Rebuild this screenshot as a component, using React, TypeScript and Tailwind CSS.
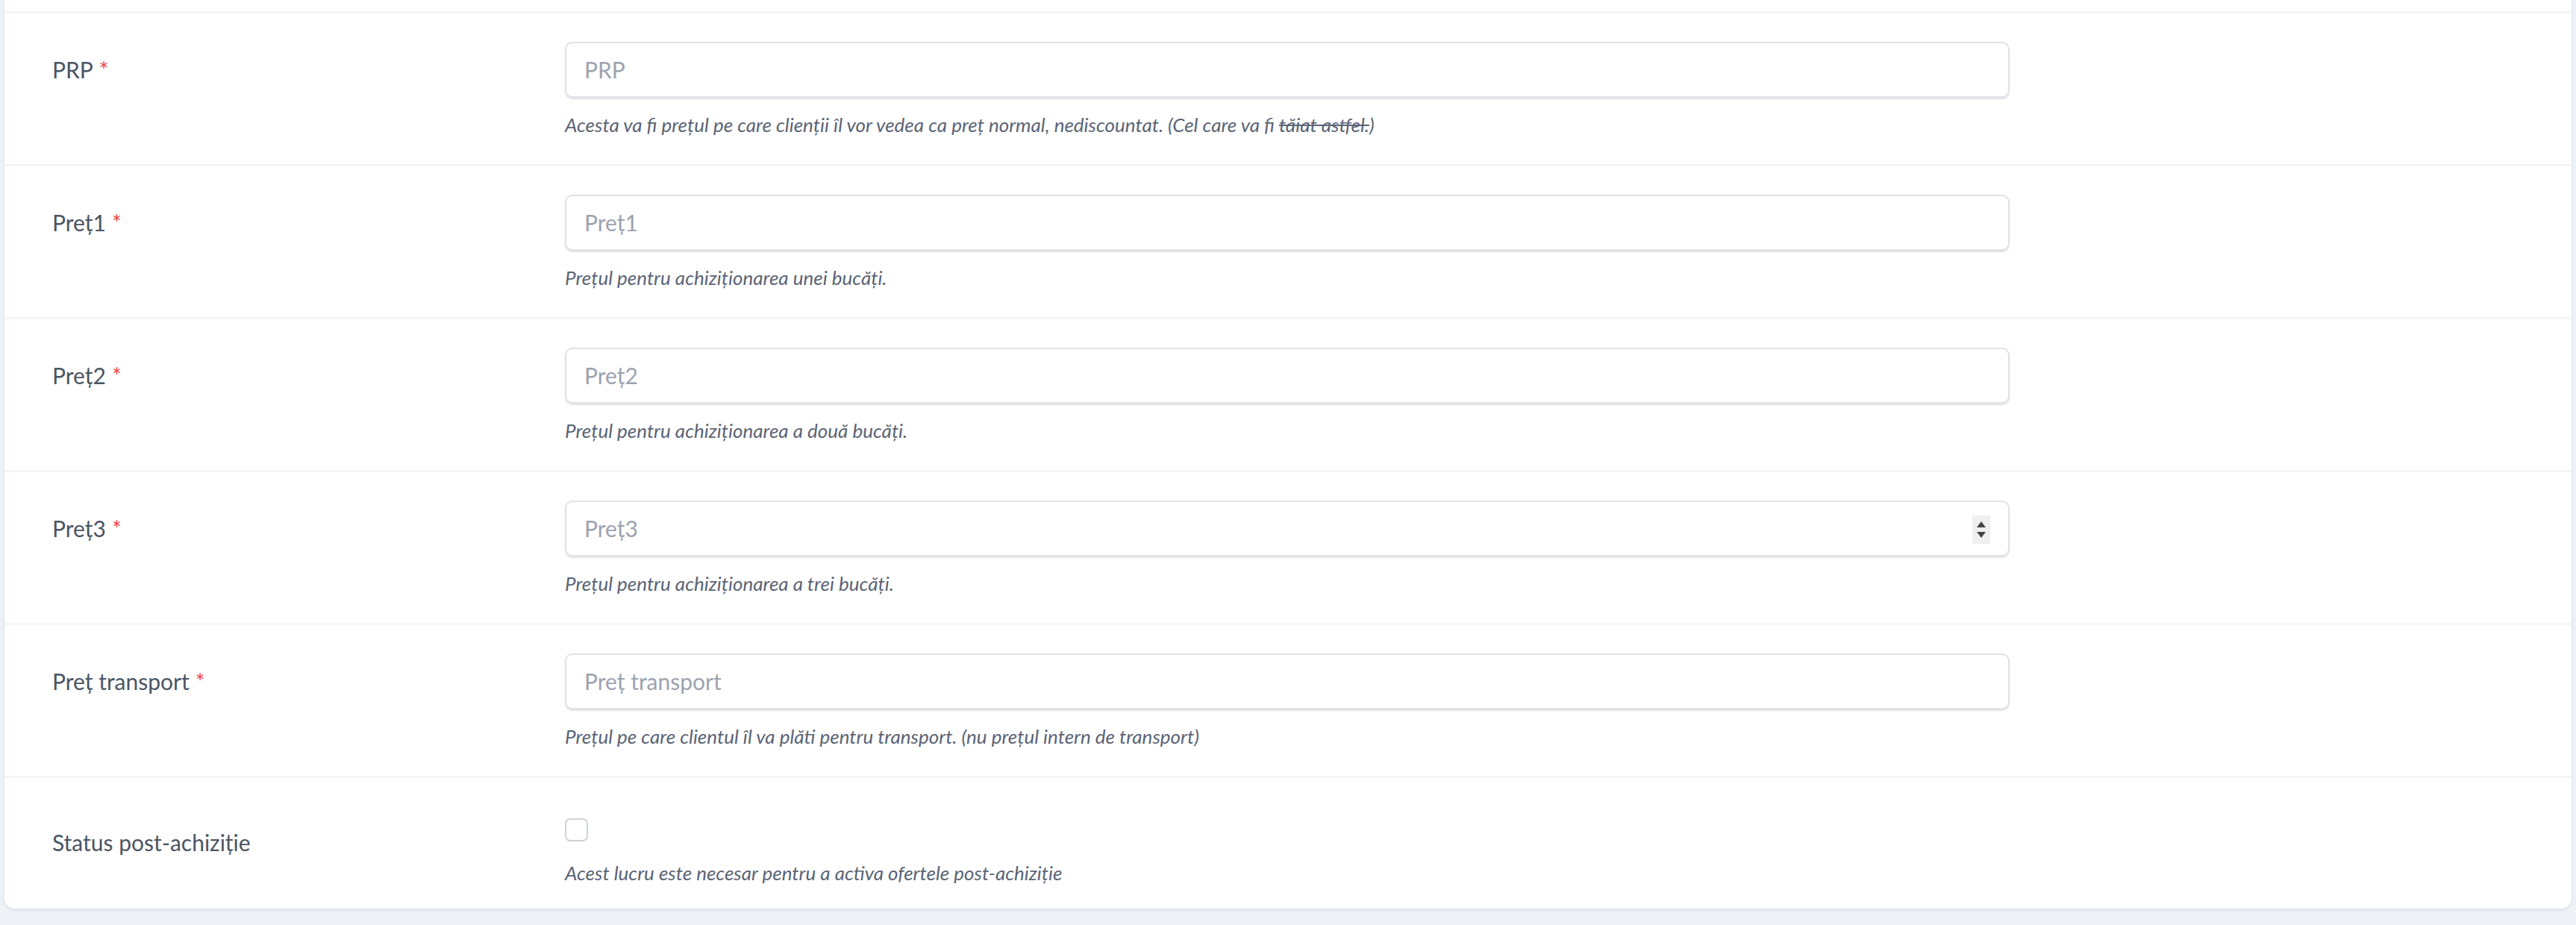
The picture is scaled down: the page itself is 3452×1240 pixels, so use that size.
import React from "react";

const rows = [
  { label: "PRP", ph: "PRP", help: <>Acesta va fi prețul pe care clienții îl vor vedea ca preț normal, nediscountat. (Cel care va fi <span className="line-through">tăiat astfel.</span>)</> },
  { label: "Preț1", ph: "Preț1", help: "Prețul pentru achiziționarea unei bucăți." },
  { label: "Preț2", ph: "Preț2", help: "Prețul pentru achiziționarea a două bucăți." },
  { label: "Preț3", ph: "Preț3", help: "Prețul pentru achiziționarea a trei bucăți.", spin: true },
  { label: "Preț transport", ph: "Preț transport", help: "Prețul pe care clientul îl va plăti pentru transport. (nu prețul intern de transport)" },
];

export default function App() {
  return (
    <div className="min-h-[1240px] bg-[#eef2f6] px-[6px] pb-[12px]" style={{ fontFamily: "Lato, 'Open Sans', sans-serif" }}>
      <div className="bg-white rounded-b-[14px] shadow-[0_2px_4px_rgba(0,0,0,0.08)]">
        <div className="h-[15px]" />
        {rows.map((r, i) => (
          <div key={i} className="flex border-t-[3px] border-[#f3f5f8] pt-[38px] pb-[35px]">
            <div className="w-[751px] pl-[64px] h-[75px] flex items-center text-[30px] text-[#4b5563]">
              {r.label}<span className="text-[#ef4444] ml-[8px]">*</span>
            </div>
            <div className="w-[1936px]">
              <div className="relative h-[75px] border-2 border-[#dfe3e8] rounded-[10px] shadow-[0_2px_2px_rgba(0,0,0,0.12)] flex items-center px-[24px] text-[30px] text-[#9ca3af]">
                {r.ph}
                {r.spin && (
                  <div className="absolute right-[24px] top-[18px] w-[24px] h-[38px] bg-[#efefef] flex flex-col items-center justify-center gap-[6px]">
                    <div className="w-0 h-0 border-l-[6px] border-r-[6px] border-b-[8px] border-l-transparent border-r-transparent border-b-[#444]" />
                    <div className="w-0 h-0 border-l-[6px] border-r-[6px] border-t-[8px] border-l-transparent border-r-transparent border-t-[#444]" />
                  </div>
                )}
              </div>
              <div className="mt-[18px] text-[26px] italic text-[#5b6475] leading-[36px]">{r.help}</div>
            </div>
          </div>
        ))}
        <div className="flex border-t-[3px] border-[#f3f5f8] pt-[54px] pb-[30px]">
          <div className="w-[751px] pl-[64px] h-[30px] flex items-center text-[30px] text-[#4b5563] mt-[2px] translate-y-[15px]">Status post-achiziție</div>
          <div>
            <div className="w-[31px] h-[31px] border-2 border-[#cfd3d8] rounded-[7px]" />
            <div className="mt-[24px] text-[26px] italic text-[#5b6475] leading-[36px]">Acest lucru este necesar pentru a activa ofertele post-achiziție</div>
          </div>
        </div>
      </div>
    </div>
  );
}
